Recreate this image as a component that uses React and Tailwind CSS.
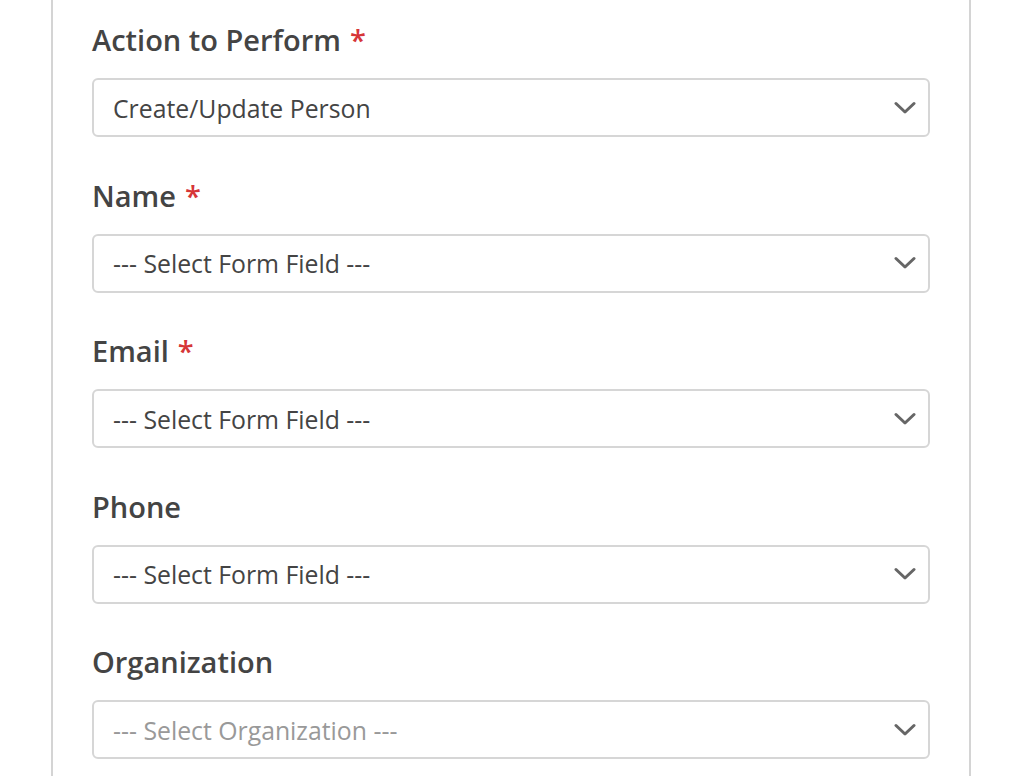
const fields = [
  { label: "Action to Perform", required: true, value: "Create/Update Person" },
  { label: "Name", required: true, value: "--- Select Form Field ---" },
  { label: "Email", required: true, value: "--- Select Form Field ---" },
  { label: "Phone", required: false, value: "--- Select Form Field ---" },
  { label: "Organization", required: false, value: "--- Select Organization ---", muted: true },
]

const Chevron = () => (
  <svg width="22" height="14" viewBox="0 0 22 14" fill="none" className="shrink-0">
    <path d="M2 2.5 L11 11 L20 2.5" stroke="#666" strokeWidth="3" strokeLinecap="round" strokeLinejoin="round" />
  </svg>
)

const Field = ({ label, required, value, muted }) => (
  <div className="flex flex-col">
    <div className="h-[36px] leading-[36px] text-[29px] font-semibold text-[#444] mb-[22px] pt-[2px]">
      {label}
      {required && <span className="text-[#d63638] ml-[9px]">*</span>}
    </div>
    <div className="h-[59px] border-2 border-[#d6d6d6] rounded-[6px] bg-white flex items-center justify-between pl-[19px] pr-[12px]">
      <span className={muted ? "text-[24.8px] text-[#999] pt-[2px]" : "text-[24.8px] text-[#444] pt-[2px]"}>{value}</span>
      <Chevron />
    </div>
  </div>
)

export default function App() {
  return (
    <div className="w-[1024px] h-[776px] bg-white overflow-hidden" style={{ fontFamily: '"Open Sans", "Noto Sans", sans-serif' }}>
      <div className="ml-[51px] w-[920px] h-full border-x-2 border-[#d4d4d4] px-[39px] pt-[20px] flex flex-col gap-[38.5px]">
        {fields.map((f) => (
          <Field key={f.label} {...f} />
        ))}
      </div>
    </div>
  )
}
